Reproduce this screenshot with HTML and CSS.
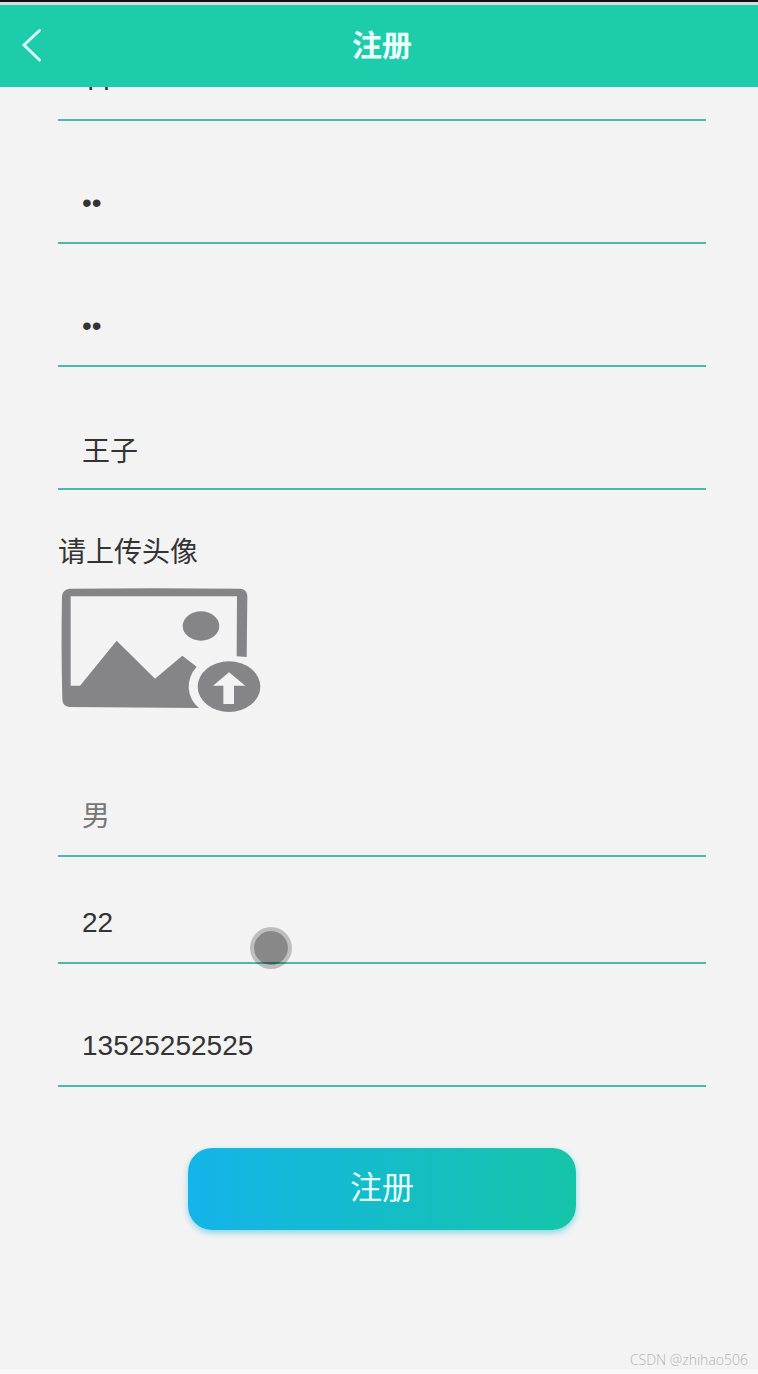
FILE: index.html
```html
<!DOCTYPE html>
<html lang="zh-CN">
<head>
  <meta charset="UTF-8">
  <meta name="viewport" content="width=device-width, initial-scale=1.0">
  <title>注册</title>

  <link rel="stylesheet" href="styles.css">
</head>
<body>
  <header class="navbar">
    <button class="navbar-back" type="button" aria-label="返回">
      <svg width="24" height="36" viewBox="0 0 24 36" fill="none" stroke="currentColor" stroke-width="3" stroke-linecap="round">
        <path d="M20.500 2.500 L5 17 L20.500 32" />
      </svg>
    </button>
    <h1 class="navbar-title">注册</h1>
  </header>

  <form class="form">
    <input class="field field-account" type="text" name="account" aria-label="账号" value="11">
    <input class="field" type="password" name="password" aria-label="密码" value="11">
    <input class="field" type="password" name="password2" aria-label="确认密码" value="11">
    <input class="field" type="text" name="name" aria-label="姓名" value="王子">

    <div class="upload">
      <span class="upload-label" id="uploadLabel">请上传头像</span>
      <button class="upload-btn" type="button" aria-labelledby="uploadLabel">
        <svg width="210" height="140" viewBox="54 180 630 420" fill="#858487">
          <path fill-rule="evenodd" d="M90 206 Q340 204 602 206 Q621 208 622 228 L620 411 L590 409 L591 229 L92 229 L92 497 L120 497 L230 362 L345 476 L427 407 L470 440 Q445 468 446 504 Q449 542 477 564 L88 561 Q69 559 67 540 Q63 380 66 228 Q68 208 90 206 Z" />
          <ellipse cx="483" cy="318" rx="55" ry="44" />
          <ellipse cx="567" cy="500" rx="94" ry="76" />
          <path fill="#f3f3f3" d="M567 457 L616 497 L582 497 L582 552 L550 552 L550 497 L519 497 Z" />
        </svg>
      </button>
    </div>

    <select class="field field-select" name="sex" aria-label="性别">
      <option>男</option>
      <option>女</option>
    </select>
    <div class="touch">
      <input class="field" type="text" name="age" aria-label="年龄" value="22">
      <span class="touch-dot"></span>
    </div>
    <input class="field" type="tel" name="phone" aria-label="手机" value="13525252525">

    <button class="submit" type="submit">注册</button>
  </form>

  <footer class="footer">CSDN @zhihao506</footer>
</body>
</html>
```
FILE: styles.css
```css
* { margin: 0; padding: 0; box-sizing: border-box; }

body {
  min-height: 100vh;
  display: flex;
  flex-direction: column;
  background-color: #f3f3f3;
  color: #333;
  font-family: 'Liberation Sans', 'Noto Sans CJK SC', sans-serif;
  font-size: 28px;
}

button,
input,
select {
  border: none;
  background: none;
  color: inherit;
  font: inherit;
}

.navbar {
  position: fixed;
  z-index: 10;
  top: 0;
  left: 0;
  right: 0;
  height: 87px;
  padding-top: 2px;
  display: grid;
  grid-template-columns: 64px 1fr 58px;
  align-items: center;
  border-top: 2px solid #111;
  background-color: #1dccab;
  box-shadow: inset 0 3px #dcdcdc;
  color: #fff;
}
.navbar-back {
  height: 36px;
  padding-left: 19px;
  color: #d8fbf3;
  line-height: 0;
  text-align: left;
}
.navbar-title {
  font-size: 30px;
  line-height: 40px;
  text-align: center;
  color: #ecfffb;
}

.form {
  display: flex;
  flex-direction: column;
  padding: 39px 52px 0 58px;
}

.field {
  width: 100%;
  height: 82px;
  padding: 2px 24px 0;
  margin-bottom: 41px;
  border-bottom: 2px solid #4cb9a8;
  border-radius: 0;
  outline: none;
}
.field-account { font-family: Roboto, sans-serif; }
.field-select {
  appearance: none;
  margin-bottom: 25px;
  color: #777;
}

.upload {
  display: flex;
  flex-direction: column;
  align-items: flex-start;
  margin-bottom: 55px;
}
.upload-label { line-height: 44px; }
.upload-btn {
  margin-top: 5px;
  line-height: 0;
}

.touch {
  position: relative;
}
.touch-dot {
  position: absolute;
  top: 45px;
  left: 192px;
  width: 42px;
  height: 42px;
  border: 4px solid rgba(0, 0, 0, 0.22);
  border-radius: 50%;
  background-color: rgba(0, 0, 0, 0.44);
  background-clip: padding-box;
  pointer-events: none;
}

.submit {
  align-self: center;
  width: 60%;
  height: 82px;
  padding-bottom: 8px;
  margin-top: 20px;
  border-radius: 24px;
  background-image: linear-gradient(to right, #14b4e9, #15c5a8);
  box-shadow: 0 3px 6px rgba(20, 180, 220, 0.45);
  color: #e4fbfb;
  font-size: 32px;
}

.footer {
  margin-top: auto;
  padding-right: 10px;
  border-bottom: 5px solid #f9f9f9;
  color: #b4b4b4;
  font-family: 'Open Sans', sans-serif;
  font-size: 14px;
  line-height: 18px;
  font-weight: 300;
  text-align: right;
}
```
